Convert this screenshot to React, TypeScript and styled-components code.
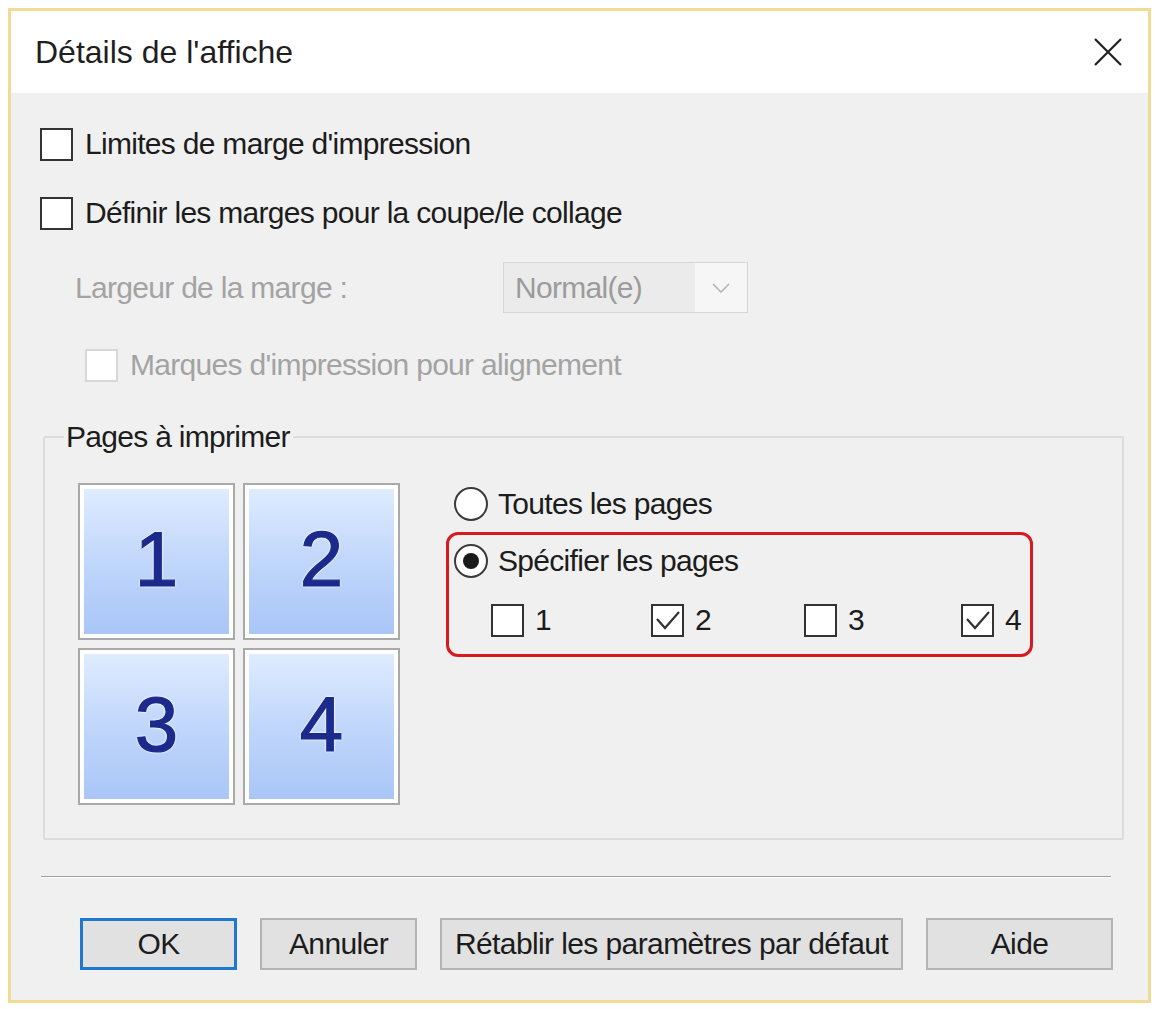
import styled, { createGlobalStyle } from "styled-components";

const GlobalStyle = createGlobalStyle`
  html, body {
    margin: 0;
    padding: 0;
    background: #ffffff;
  }
  body {
    padding: 8px;
    font-family: "Liberation Sans", Arial, sans-serif;
    color: #1c1c1c;
  }
`;

const Window = styled.div`
  width: 1143px;
  height: 995px;
  box-sizing: border-box;
  border: 3px solid #f0dc94;
  display: flex;
  flex-direction: column;
  background: #f0f0f0;
`;

const TitleBar = styled.div`
  height: 82px;
  flex-shrink: 0;
  background: #ffffff;
  display: flex;
  align-items: center;
  justify-content: space-between;
  padding: 0 24px 0 24px;
`;

const Title = styled.div`
  font-size: 32px;
  color: #1f1f1f;
`;

const CloseButton = styled.div`
  width: 32px;
  height: 30px;
  display: flex;
  align-items: center;
  justify-content: center;
`;

const Body = styled.div`
  flex: 1;
  display: flex;
  flex-direction: column;
  padding: 0 24px 0 29px;
  font-size: 30px;
  letter-spacing: -0.7px;
`;

const OptionRow = styled.div<{ $top: number; $indent?: number }>`
  display: flex;
  align-items: center;
  height: 34px;
  margin-top: ${(p) => p.$top}px;
  padding-left: ${(p) => p.$indent ?? 0}px;
  gap: 12px;
`;

const Label = styled.span<{ $disabled?: boolean }>`
  color: ${(p) => (p.$disabled ? "#a3a3a3" : "#1c1c1c")};
  white-space: nowrap;
`;

const BoxFrame = styled.span<{ $disabled?: boolean }>`
  width: 33px;
  height: 33px;
  box-sizing: border-box;
  flex-shrink: 0;
  border: 2px solid ${(p) => (p.$disabled ? "#d8d8d8" : "#333333")};
  background: #ffffff;
  display: inline-flex;
  align-items: center;
  justify-content: center;
`;

const RadioFrame = styled.span`
  width: 34px;
  height: 34px;
  box-sizing: border-box;
  flex-shrink: 0;
  border-radius: 50%;
  border: 2px solid #3a3a3a;
  background: #ffffff;
  display: inline-flex;
  align-items: center;
  justify-content: center;
`;

const RadioDot = styled.span`
  width: 16px;
  height: 16px;
  border-radius: 50%;
  background: #1a1a1a;
`;

const MarginWidthRow = styled.div`
  display: grid;
  grid-template-columns: 428px 245px;
  align-items: center;
  margin-top: 32px;
  height: 51px;
  padding-left: 35px;
`;

const Dropdown = styled.div`
  height: 51px;
  box-sizing: border-box;
  border: 1px solid #d6d6d6;
  background: #f6f6f6;
  display: flex;
  align-items: stretch;
`;

const DropdownValue = styled.div`
  flex: 1;
  background: #ebebeb;
  color: #9b9b9b;
  display: flex;
  align-items: center;
  padding-left: 11px;
`;

const DropdownArrow = styled.div`
  width: 52px;
  display: flex;
  align-items: center;
  justify-content: center;
`;

const GroupBox = styled.fieldset`
  margin: 38px 0 0 3px;
  padding: 0;
  height: 420px;
  box-sizing: border-box;
  border: 2px solid #dcdcdc;
  border-radius: 2px;
  min-inline-size: 0;
`;

const GroupLegend = styled.legend`
  margin-left: 19px;
  padding: 0 3px 0 2px;
  height: 34px;
  line-height: 34px;
  color: #1c1c1c;
`;

const GroupContent = styled.div`
  display: flex;
  margin-top: 29px;
  padding-left: 33px;
  gap: 46px;
`;

const TileGrid = styled.div`
  display: grid;
  grid-template-columns: repeat(2, 157px);
  grid-template-rows: repeat(2, 157px);
  gap: 8px;
`;

const Tile = styled.div`
  box-sizing: border-box;
  border: 2px solid #a9a9a9;
  padding: 4px;
  background: #ffffff;
  display: flex;
`;

const TileFace = styled.div`
  flex: 1;
  background: linear-gradient(180deg, #dfecff 0%, #c3d8fb 45%, #a9c6f7 100%);
  display: flex;
  align-items: center;
  justify-content: center;
  font-size: 78px;
  letter-spacing: 0;
  color: #1c2a8c;
  -webkit-text-stroke: 1.2px #1c2a8c;
  text-shadow: 0 0 3px #ffffff, 0 0 3px #ffffff, 0 0 2px #ffffff;
  padding-bottom: 4px;
`;

const PageChoice = styled.div`
  display: flex;
  flex-direction: column;
  padding-top: 4px;
`;

const RadioRow = styled.div<{ $indent?: number }>`
  display: flex;
  align-items: center;
  gap: 10px;
  height: 34px;
  padding-left: ${(p) => p.$indent ?? 0}px;
`;

const Highlight = styled.div`
  width: 587px;
  box-sizing: border-box;
  margin-top: 11px;
  border: 3px solid #d51a20;
  border-radius: 12px;
  padding: 9px 8px 17px 5px;
  display: flex;
  flex-direction: column;
`;

const PageChecks = styled.div`
  display: flex;
  margin-top: 25px;
  padding-left: 37px;
`;

const PageCheck = styled.div<{ $width?: number }>`
  display: flex;
  align-items: center;
  gap: 11px;
  width: ${(p) => (p.$width ? `${p.$width}px` : "auto")};
  height: 34px;
`;

const Separator = styled.div`
  margin: 36px 13px 0 1px;
  height: 1px;
  background: #a0a0a0;
  border-bottom: 1px solid #ffffff;
`;

const ButtonBar = styled.div`
  display: flex;
  gap: 23px;
  margin-top: 40px;
  padding-left: 40px;
`;

const Button = styled.button<{ $width: number; $default?: boolean }>`
  width: ${(p) => p.$width}px;
  height: 52px;
  box-sizing: border-box;
  background: #e1e1e1;
  border: ${(p) => (p.$default ? "3px solid #1f77cf" : "2px solid #b4b4b4")};
  font-family: "Liberation Sans", Arial, sans-serif;
  font-size: 30px;
  letter-spacing: -0.6px;
  color: #1c1c1c;
  padding: 0;
`;

const CheckBox = ({ checked, disabled }: { checked?: boolean; disabled?: boolean }) => (
  <BoxFrame $disabled={disabled}>
    {checked && (
      <svg width="29" height="29" viewBox="0 0 29 29">
        <polyline points="4,13 12,22 26,6" fill="none" stroke="#333" strokeWidth="2.2" />
      </svg>
    )}
  </BoxFrame>
);

const Radio = ({ checked }: { checked?: boolean }) => (
  <RadioFrame>{checked && <RadioDot />}</RadioFrame>
);

const pages = [
  { n: 1, checked: false, width: 160 },
  { n: 2, checked: true, width: 153 },
  { n: 3, checked: false, width: 157 },
  { n: 4, checked: true },
];

const App = () => {
  return (
    <>
      <GlobalStyle />
      <Window>
        <TitleBar>
          <Title>Détails de l'affiche</Title>
          <CloseButton>
            <svg width="30" height="28" viewBox="0 0 30 28">
              <path d="M2 1 L28 27 M28 1 L2 27" stroke="#222" strokeWidth="2.2" fill="none" />
            </svg>
          </CloseButton>
        </TitleBar>
        <Body>
          <OptionRow $top={34}>
            <CheckBox />
            <Label>Limites de marge d'impression</Label>
          </OptionRow>
          <OptionRow $top={35}>
            <CheckBox />
            <Label>Définir les marges pour la coupe/le collage</Label>
          </OptionRow>
          <MarginWidthRow>
            <Label $disabled>Largeur de la marge :</Label>
            <Dropdown>
              <DropdownValue>Normal(e)</DropdownValue>
              <DropdownArrow>
                <svg width="18" height="10" viewBox="0 0 18 10">
                  <polyline points="1,1 9,9 17,1" fill="none" stroke="#b5b5b5" strokeWidth="1.6" />
                </svg>
              </DropdownArrow>
            </Dropdown>
          </MarginWidthRow>
          <OptionRow $top={35} $indent={45}>
            <CheckBox disabled />
            <Label $disabled>Marques d'impression pour alignement</Label>
          </OptionRow>
          <GroupBox>
            <GroupLegend>Pages à imprimer</GroupLegend>
            <GroupContent>
              <TileGrid>
                {[1, 2, 3, 4].map((n) => (
                  <Tile key={n}>
                    <TileFace>{n}</TileFace>
                  </Tile>
                ))}
              </TileGrid>
              <PageChoice>
                <RadioRow $indent={8}>
                  <Radio />
                  <Label>Toutes les pages</Label>
                </RadioRow>
                <Highlight>
                  <RadioRow>
                    <Radio checked />
                    <Label>Spécifier les pages</Label>
                  </RadioRow>
                  <PageChecks>
                    {pages.map((p) => (
                      <PageCheck key={p.n} $width={p.width}>
                        <CheckBox checked={p.checked} />
                        <Label>{p.n}</Label>
                      </PageCheck>
                    ))}
                  </PageChecks>
                </Highlight>
              </PageChoice>
            </GroupContent>
          </GroupBox>
          <Separator />
          <ButtonBar>
            <Button $width={157} $default>
              OK
            </Button>
            <Button $width={157}>Annuler</Button>
            <Button $width={463}>Rétablir les paramètres par défaut</Button>
            <Button $width={187}>Aide</Button>
          </ButtonBar>
        </Body>
      </Window>
    </>
  );
};

export default App;
